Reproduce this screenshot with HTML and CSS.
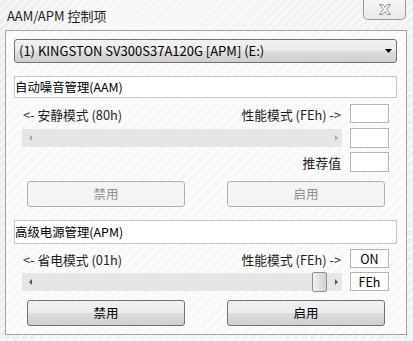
FILE: index.html
```html
<!DOCTYPE html>
<html>
<head>
<meta charset="utf-8">
<link rel="stylesheet" href="styles.css">
</head>
<body>
<div class="window">
  <div class="titlebar">
    <div class="title">AAM/APM 控制项</div>
    <div class="close">
      <svg width="14" height="11" viewBox="0 0 14 11"><path d="M1.5 0.5 H4.5 L7 3.3 L9.5 0.5 H12.5 L8.6 5.5 L12.5 10.5 H9.5 L7 7.7 L4.5 10.5 H1.5 L5.4 5.5 Z" fill="#fbfbfb" stroke="#8a8a8a" stroke-width="1" stroke-linejoin="round"/></svg>
    </div>
  </div>
  <div class="panel">
    <div class="combo">
      <span class="combo-text">(1) KINGSTON SV300S37A120G [APM] (E:)</span>
      <svg class="combo-arrow" width="7" height="4" viewBox="0 0 7 4"><path d="M0 0 H7 L3.5 4 Z" fill="#000"/></svg>
    </div>

    <div class="header h-aam">自动噪音管理(AAM)</div>
    <div class="group">
      <div class="row r1">
        <div class="labels low"><span>&lt;- 安静模式 (80h)</span><span>性能模式 (FEh) -&gt;</span></div>
        <div class="box b19"></div>
      </div>
      <div class="row r2">
        <div class="slider disabled">
          <span class="arr left"></span>
          <span class="arr right"></span>
        </div>
        <div class="box b20"></div>
      </div>
      <div class="row r3">
        <div class="labels end"><span>推荐值</span></div>
        <div class="box b20"></div>
      </div>
      <div class="buttons b-aam">
        <div class="btn off">禁用</div>
        <div class="btn off">启用</div>
      </div>
    </div>

    <div class="header h-apm">高级电源管理(APM)</div>
    <div class="group">
      <div class="row r4">
        <div class="labels"><span>&lt;- 省电模式 (01h)</span><span>性能模式 (FEh) -&gt;</span></div>
        <div class="box b19">ON</div>
      </div>
      <div class="row r5">
        <div class="slider">
          <span class="arr left"></span>
          <span class="thumb"></span>
          <span class="arr right"></span>
        </div>
        <div class="box b19">FEh</div>
      </div>
      <div class="buttons b-apm">
        <div class="btn">禁用</div>
        <div class="btn">启用</div>
      </div>
    </div>
  </div>
</div>
</body>
</html>
```

FILE: styles.css
```css
* { box-sizing: border-box; }
html, body { margin: 0; padding: 0; }
body {
  width: 413px;
  height: 341px;
  overflow: hidden;
  font-family: "Noto Sans CJK SC", "Noto Sans", sans-serif;
  font-size: 12px;
  color: #1a1a1a;
}
.window {
  width: 413px;
  height: 341px;
  background-color: #f0f1f2;
  background-image:
    repeating-linear-gradient(135deg, rgba(255,255,255,0.55) 0 2px, rgba(255,255,255,0) 2px 6px),
    linear-gradient(90deg, #eceef0 0%, #f7f7f8 30%, #f3f4f5 60%, #eef0f1 100%);
  display: flex;
  flex-direction: column;
}
.titlebar {
  height: 30px;
  display: flex;
  align-items: flex-start;
  padding-left: 7px;
}
.title {
  margin-top: 7px;
  line-height: 18px;
  font-size: 13px;
  color: #1e1e1e;
}
.close {
  margin-left: auto;
  margin-right: 7px;
  width: 43px;
  height: 20px;
  border: 1px solid #9a9a9a;
  border-top: none;
  border-radius: 0 0 5px 5px;
  background: linear-gradient(#f6f6f6, #e9e9e9);
  display: flex;
  align-items: center;
  justify-content: center;
}
.close svg { display: block; margin-top: -1px; }

.panel {
  margin: 0 6px 0 5px;
  height: 305px;
  border: 1px solid #a3a3a3;
  background-color: #f8f8f8;
  background-image: repeating-linear-gradient(135deg, rgba(255,255,255,0.9) 0 2px, rgba(255,255,255,0) 2px 7px);
  padding: 8px 9px 0 8px;
  display: flex;
  flex-direction: column;
}
.combo {
  height: 24px;
  border: 1px solid #707070;
  border-radius: 3px;
  background: linear-gradient(#f2f2f2 0%, #ebebeb 48%, #dddddd 52%, #cfcfcf 100%);
  display: flex;
  align-items: center;
  padding-left: 4px;
  padding-right: 4px;
}
.combo-text { font-size: 13px; color: #000; line-height: 18px; }
.combo-arrow { margin-left: auto; display: block; margin-right: 0; }

.header {
  height: 22px;
  border: 1px solid #c6c6c6;
  background: #ffffff;
  color: #000;
  font-size: 12.4px;
  line-height: 20px;
  padding-left: 0;
}
.h-aam { margin-top: 13px; height: 22px; }
.h-apm { margin-top: 13px; height: 24px; line-height: 22px; }

.group { padding: 0 8px; display: flex; flex-direction: column; }
.row {
  display: grid;
  grid-template-columns: 1fr 39px;
  column-gap: 8px;
  align-items: center;
}
.r1 { margin-top: 5px; }
.r2 { margin-top: 5px; }
.r3 { margin-top: 4px; }
.r4 { margin-top: 5px; }
.r5 { margin-top: 4px; }

.labels {
  display: flex;
  justify-content: space-between;
  padding-left: 1px;
  padding-right: 1px;
  padding-top: 2px;
  color: #1e1e1e;
  font-size: 12.8px;
  line-height: 16px;
}
.labels.low { padding-top: 4px; }
.labels.end { justify-content: flex-end; padding-top: 1px; }

.box {
  width: 39px;
  border: 1px solid #b4b4b4;
  background: #ffffff;
  text-align: center;
  color: #000;
  font-size: 12.5px;
}
.b19 { height: 19px; line-height: 17px; }
.b20 { height: 20px; line-height: 18px; }

.slider {
  position: relative;
  height: 18px;
  background: #e6e6e6;
  display: flex;
  align-items: center;
  justify-content: space-between;
  padding: 0 4px 0 7px;
}
.arr {
  width: 0; height: 0;
  border-top: 3px solid transparent;
  border-bottom: 3px solid transparent;
}
.arr.left { border-right: 3px solid #555; }
.arr.right { border-left: 3px solid #555; }
.slider.disabled .arr.left { border-right-color: #a8a8a8; }
.slider.disabled .arr.right { border-left-color: #a8a8a8; }
.thumb {
  position: absolute;
  right: 15px;
  top: -1px;
  width: 15px;
  height: 20px;
  border: 1px solid #8e8e8e;
  border-radius: 2px;
  background: linear-gradient(90deg, #f3f3f3, #e0e0e0 50%, #d2d2d2);
}

.buttons {
  display: flex;
  justify-content: space-between;
  padding: 0 4px 0 5px;
  margin-top: 9px;
}
.btn {
  width: 158px;
  height: 26px;
  border: 1px solid #707070;
  border-radius: 3px;
  background: linear-gradient(#f2f2f2 0%, #ebebeb 48%, #dddddd 52%, #cfcfcf 100%);
  text-align: center;
  line-height: 24px;
  color: #000;
  font-size: 12.5px;
}
.btn.off {
  border-color: #adb2b5;
  background: #f4f4f4;
  color: #8d8d8d;
}
```
